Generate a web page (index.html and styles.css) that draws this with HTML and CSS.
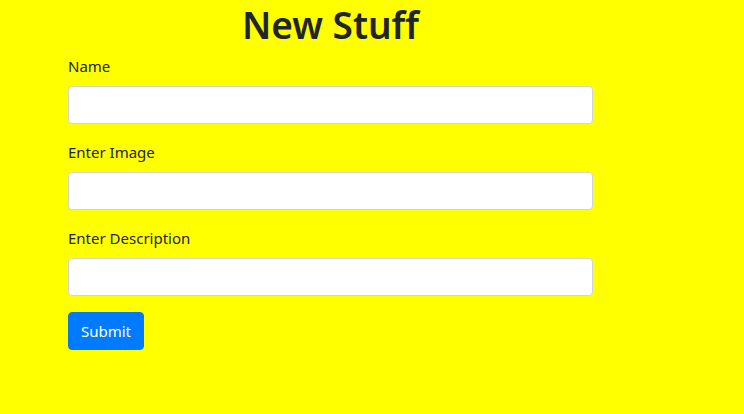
FILE: index.html
```html
<!DOCTYPE html>
<html>
<head>
<meta charset="utf-8">
<link rel="stylesheet" href="styles.css">
</head>
<body>
<div class="wrap">
  <h1 class="title">New Stuff</h1>
  <form class="form">
    <div class="group">
      <label class="label">Name</label>
      <input class="input" type="text">
    </div>
    <div class="group">
      <label class="label">Enter Image</label>
      <input class="input" type="text">
    </div>
    <div class="group">
      <label class="label">Enter Description</label>
      <input class="input" type="text">
    </div>
    <button class="btn" type="button">Submit</button>
  </form>
</div>
</body>
</html>
```
FILE: styles.css
```css
html, body {
  margin: 0;
  padding: 0;
  background: #ffff00;
  height: 100%;
}
body {
  font-family: "Noto Sans", "Open Sans", sans-serif;
  font-size: 16px;
  line-height: 1.5;
  color: #212529;
}
.wrap {
  margin-left: 68px;
  width: 525px;
}
.title {
  margin: 0 0 6px 0;
  padding-top: 2px;
  font-size: 37px;
  line-height: 46px;
  font-weight: 600;
  text-align: center;
}
.form {
  display: flex;
  flex-direction: column;
  align-items: flex-start;
}
.group {
  display: flex;
  flex-direction: column;
  width: 100%;
  margin-bottom: 16px;
}
.label {
  display: block;
  font-size: 15px;
  line-height: 24px;
  margin-bottom: 8px;
}
.input {
  box-sizing: border-box;
  width: 100%;
  height: 38px;
  border: 1px solid #ced4da;
  border-radius: 4px;
  background: #fff;
  padding: 6px 12px;
  font: inherit;
  margin: 0;
}
.btn {
  box-sizing: border-box;
  height: 38px;
  width: 76px;
  padding: 0;
  border: 1px solid #007bff;
  background: #007bff;
  color: #fff;
  border-radius: 4px;
  font-family: inherit;
  font-size: 15px;
  cursor: pointer;
}
```
